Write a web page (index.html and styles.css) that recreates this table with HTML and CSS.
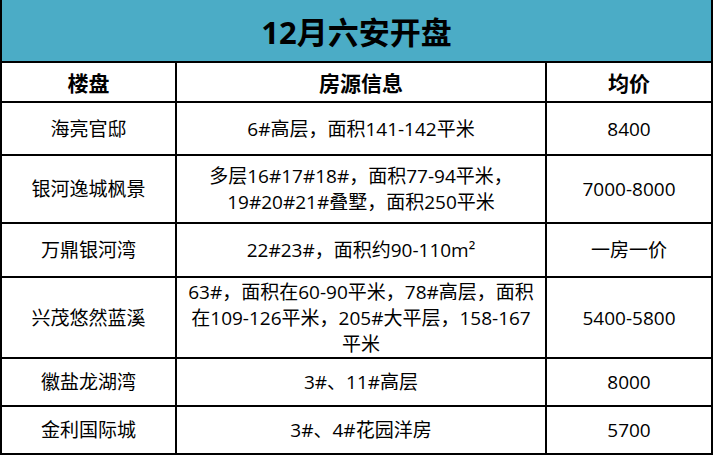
FILE: index.html
```html
<!DOCTYPE html>
<html lang="zh-CN">
<head>
<meta charset="utf-8">
<title>12月六安开盘</title>
<link rel="stylesheet" href="styles.css">
</head>
<body>
<table class="sheet">
  <colgroup>
    <col class="c1">
    <col class="c2">
    <col class="c3">
  </colgroup>
  <thead>
    <tr class="r-title"><th colspan="3" class="title">12月六安开盘</th></tr>
    <tr class="r-head"><th>楼盘</th><th>房源信息</th><th>均价</th></tr>
  </thead>
  <tbody>
    <tr class="r1"><td>海亮官邸</td><td>6#高层，面积141-142平米</td><td>8400</td></tr>
    <tr class="r2"><td>银河逸城枫景</td><td>多层16#17#18#，面积77-94平米，<br>19#20#21#叠墅，面积250平米</td><td>7000-8000</td></tr>
    <tr class="r3"><td>万鼎银河湾</td><td>22#23#，面积约90-110m²</td><td>一房一价</td></tr>
    <tr class="r4"><td>兴茂悠然蓝溪</td><td>63#，面积在60-90平米，78#高层，面积<br>在109-126平米，205#大平层，158-167<br>平米</td><td>5400-5800</td></tr>
    <tr class="r5"><td>徽盐龙湖湾</td><td>3#、11#高层</td><td>8000</td></tr>
    <tr class="r6"><td>金利国际城</td><td>3#、4#花园洋房</td><td>5700</td></tr>
  </tbody>
</table>
</body>
</html>
```

FILE: styles.css
```css
html, body {
  margin: 0;
  padding: 0;
  background: #ffffff;
}

.sheet {
  border-collapse: collapse;
  width: 711px;
  table-layout: fixed;
  font-family: "Open Sans", "Noto Sans CJK SC", sans-serif;
  color: #000;
  border-bottom: 2px solid #000;
  border-left: 2px solid #000;
  border-right: 2px solid #000;
}

.c1 { width: 175px; }
.c2 { width: 370px; }
.c3 { width: 166px; }

.sheet th,
.sheet td {
  border: 2px solid #000;
  padding: 0;
  text-align: center;
  vertical-align: middle;
}

.sheet .title {
  background: #4bacc6;
  border-top: none;
  font-size: 31px;
  font-weight: 700;
  height: 61px;
  font-family: "Open Sans", "Noto Sans CJK SC", sans-serif;
}

.r-head th {
  font-size: 21px;
  font-weight: 700;
  height: 38px;
}

.sheet td {
  font-size: 19px;
  line-height: 26px;
}

.r1 td { height: 51px; }
.r2 td { height: 66px; }
.r3 td { height: 52px; }
.r4 td { height: 79px; }
.r5 td { height: 46px; }
.r6 td { height: 46px; }
```
